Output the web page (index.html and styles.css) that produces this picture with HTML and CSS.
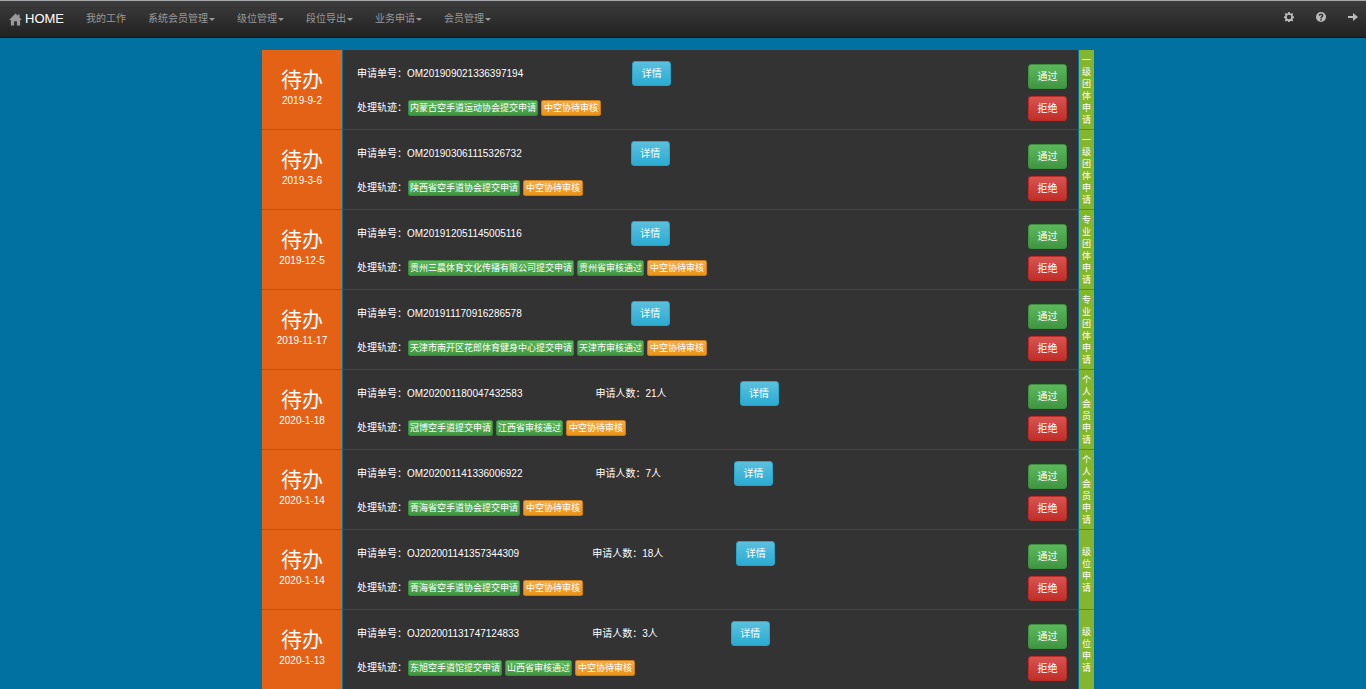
FILE: index.html
```html
<!DOCTYPE html>
<html lang="zh-CN">
<head>
<meta charset="utf-8">
<title>我的工作</title>
<link rel="stylesheet" href="styles.css">
</head>
<body>
<header class="navbar">
  <a class="brand" href="#">
    <svg class="home-icon" viewBox="0 0 14 13" aria-hidden="true"><path d="M7 0 0 7h2v6h3.500V8.500h3V13H12V7h2l-2.500-2.500V1h-2v1.500z"/></svg>
    <span>HOME</span>
  </a>
  <nav class="menu">
    <a href="#">我的工作</a>
    <a href="#">系统会员管理<i class="caret"></i></a>
    <a href="#">级位管理<i class="caret"></i></a>
    <a href="#">段位导出<i class="caret"></i></a>
    <a href="#">业务申请<i class="caret"></i></a>
    <a href="#">会员管理<i class="caret"></i></a>
  </nav>
  <div class="tools">
    <a href="#" aria-label="设置"><svg viewBox="0 0 20 20"><path fill-rule="evenodd" d="M8.500 0h3l.6 2.700 1.900.8 2.400-1.500 2.100 2.100-1.500 2.400.8 1.900 2.200.6v3l-2.200.6-.8 1.900 1.500 2.400-2.100 2.100-2.400-1.500-1.900.8-.6 2.700h-3l-.6-2.700-1.900-.8-2.400 1.500-2.100-2.100L3 14.500l-.8-1.900L0 12V9l2.200-.6L3 6.500 1.500 4.100 3.600 2 6 3.500l1.900-.8zM10 5.500a4.500 4.500 0 1 0 0 9 4.500 4.500 0 0 0 0-9z"/></svg></a>
    <a href="#" aria-label="帮助"><svg viewBox="0 0 20 20"><path fill-rule="evenodd" d="M10 0a10 10 0 1 0 0 20 10 10 0 0 0 0-20zM8.500 14.500h3v3h-3zM5.500 7.500C5.500 4.500 7.500 3 10 3s4.700 1.500 4.700 4c0 3.500-3.200 3.200-3.200 6h-3c0-4 3-4 3-6 0-1-.6-1.500-1.500-1.500S8.500 6.300 8.500 7.500z"/></svg></a>
    <a href="#" aria-label="退出"><svg viewBox="0 0 20 20"><path d="M0 8h10V2l10 8-10 8v-6H0z"/></svg></a>
  </div>
</header>
<main class="page">
  <ul class="tasks" id="tasks"></ul>
</main>
<script src="tasks.js"></script>
</body>
</html>
```
FILE: styles.css
```css
* {
  box-sizing: border-box;
}
body {
  margin: 0;
  background: #0071a1;
  color: #fff;
  font: 10px/16px "Liberation Sans", "Noto Sans CJK SC", sans-serif;
}
a {
  color: #999;
  text-decoration: none;
}
svg {
  display: block;
  fill: currentColor;
}
.navbar {
  display: flex;
  align-items: center;
  height: 38px;
  padding: 0 0 0 9px;
  border-top: 1px solid #a5a7a9;
  border-bottom: 1px solid #101518;
  background: linear-gradient(#3c3c3c, #222);
}
.brand {
  display: flex;
  align-items: center;
  gap: 3px;
  padding-right: 11px;
  font-size: 13px;
}
.brand span {
  color: #fff;
}
.home-icon {
  width: 13px;
  height: 13px;
}
.menu {
  display: flex;
}
.menu a {
  display: flex;
  align-items: center;
  gap: 1px;
  padding: 0 11px;
}
.caret {
  border: 3px solid transparent;
  border-top-color: #999;
  border-bottom: 0;
}
.tools {
  display: flex;
  gap: 22px;
  margin-left: auto;
  padding: 0 8px 4px 0;
}
.tools a {
  color: #bbb;
}
.tools svg {
  width: 10px;
  height: 10px;
}
.page {
  padding: 12px 10px 0 0;
}
.tasks {
  max-width: 832px;
  margin: 0 auto;
  padding: 0;
  list-style: none;
}
.task {
  display: grid;
  grid-template-columns: 80px 1fr 15px;
  gap: 1px;
  min-height: 80px;
}
.state {
  padding-top: 16px;
  border-bottom: 1px solid #8a6148;
  background: #e36216;
  text-align: center;
}
.state strong {
  display: block;
  font-size: 21px;
  font-weight: 400;
  line-height: 27px;
}
.detail {
  display: flex;
  justify-content: space-between;
  padding: 11px 11px 0 14px;
  border-bottom: 1px solid #1d566b;
  background: #333;
}
.line {
  display: flex;
  align-items: center;
  gap: 73px;
  height: 25px;
}
.line.single {
  gap: 109px;
}
.track {
  display: flex;
  align-items: center;
  gap: 3px;
  margin-top: 14px;
}
.track .caption {
  width: 48px;
  white-space: nowrap;
}
.tag {
  padding: 0 1px;
  border: 1px solid #398a3b;
  border-radius: 2px;
  background: linear-gradient(#5cb85c, #419641);
  font-size: 9px;
  line-height: 14px;
}
.tag.wait {
  padding: 0 2px;
  border-color: #c97c13;
  background: linear-gradient(#f0ad4e, #eb9316);
}
.btn {
  width: 39px;
  height: 25px;
  padding: 0;
  border: 1px solid #3e8f3e;
  border-radius: 3px;
  background: linear-gradient(#5cb85c, #419641);
  color: #fff;
  font: inherit;
}
.btn.info {
  border-color: #28a4c9;
  background: linear-gradient(#5bc0de, #2aabd2);
}
.btn.danger {
  border-color: #b92c28;
  background: linear-gradient(#d9534f, #c12e2a);
}
.actions {
  display: flex;
  flex-direction: column;
  gap: 7px;
  padding-top: 3px;
}
.kind {
  display: flex;
  align-items: center;
  padding: 0 3px;
  border-bottom: 1px solid #4d8b52;
  background: #84b52f;
  font-size: 9px;
  line-height: 12px;
  word-break: break-all;
}
```
FILE: tasks.js
```js
const tasks = [
  ["2019-9-2", "OM201909021336397194", "", ["内蒙古空手道运动协会提交申请"], "一级团体申请"],
  ["2019-3-6", "OM201903061115326732", "", ["陕西省空手道协会提交申请"], "一级团体申请"],
  ["2019-12-5", "OM201912051145005116", "", ["贵州三晨体育文化传播有限公司提交申请", "贵州省审核通过"], "专业团体申请"],
  ["2019-11-17", "OM201911170916286578", "", ["天津市南开区花郎体育健身中心提交申请", "天津市审核通过"], "专业团体申请"],
  ["2020-1-18", "OM202001180047432583", "21", ["冠博空手道提交申请", "江西省审核通过"], "个人会员申请"],
  ["2020-1-14", "OM202001141336006922", "7", ["青海省空手道协会提交申请"], "个人会员申请"],
  ["2020-1-14", "OJ202001141357344309", "18", ["青海省空手道协会提交申请"], "级位申请"],
  ["2020-1-13", "OJ202001131747124833", "3", ["东旭空手道馆提交申请", "山西省审核通过"], "级位申请"]
];

document.getElementById("tasks").innerHTML = tasks.map(([date, number, people, steps, kind]) => `
  <li class="task">
    <div class="state"><strong>待办</strong><time>${date}</time></div>
    <div class="detail">
      <div>
        <div class="line${people ? "" : " single"}">
          <span>申请单号：${number}</span>
          ${people ? `<span>申请人数：${people}人</span>` : ""}
          <button class="btn info" type="button">详情</button>
        </div>
        <div class="track">
          <span class="caption">处理轨迹：</span>
          ${steps.map(step => `<span class="tag">${step}</span>`).join("")}
          <span class="tag wait">中空协待审核</span>
        </div>
      </div>
      <div class="actions">
        <button class="btn" type="button">通过</button>
        <button class="btn danger" type="button">拒绝</button>
      </div>
    </div>
    <div class="kind">${kind}</div>
  </li>`).join("");
```
